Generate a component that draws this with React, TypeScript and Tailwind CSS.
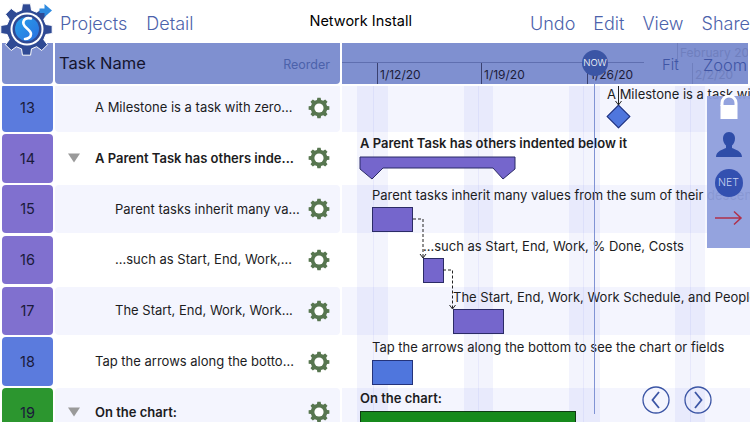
const rows = [
  { id: 13, color: "bg-[#5b7bdd]", name: "A Milestone is a task with zero...", indent: "pl-[40px]", tint: true },
  { id: 14, color: "bg-[#8070cf]", name: "A Parent Task has others inde...", indent: "pl-[40px]", bold: true, caret: true },
  { id: 15, color: "bg-[#8070cf]", name: "Parent tasks inherit many va...", indent: "pl-[60px]", tint: true },
  { id: 16, color: "bg-[#8070cf]", name: "...such as Start, End, Work,...", indent: "pl-[60px]" },
  { id: 17, color: "bg-[#8070cf]", name: "The Start, End, Work, Work...", indent: "pl-[60px]", tint: true },
  { id: 18, color: "bg-[#5b7bdd]", name: "Tap the arrows along the botto...", indent: "pl-[40px]" },
  { id: 19, color: "bg-[#2c962f]", name: "On the chart:", indent: "pl-[40px]", bold: true, caret: true, tint: true },
];

const stripes = [
  { box: "left-[15px] w-[31px]", line: "left-[16px]" },
  { box: "left-[122px] w-[29px]", line: "left-[14px]" },
  { box: "left-[227px] w-[31px]", line: "left-[14px]" },
  { box: "left-[333px] w-[30px]", line: "left-[15px]" },
];

function gearPath(cx: number, cy: number, outer: number, inner: number, teeth: number) {
  const step = (Math.PI * 2) / teeth;
  const pts: string[] = [];
  for (let i = 0; i < teeth; i++) {
    const a = i * step - Math.PI / 2;
    const corners = [
      [inner, a - step * 0.32],
      [outer, a - step * 0.2],
      [outer, a + step * 0.2],
      [inner, a + step * 0.32],
    ];
    for (const [r, t] of corners) {
      pts.push(`${(cx + r * Math.cos(t)).toFixed(2)} ${(cy + r * Math.sin(t)).toFixed(2)}`);
    }
  }
  return "M" + pts.join("L") + "Z";
}

function Gear() {
  return (
    <svg width="22" height="22" viewBox="0 0 22 22" className="shrink-0">
      <path d={gearPath(11, 11, 10.5, 8.3, 8)} fill="#57764f" />
      <circle cx="11" cy="11" r="4.6" fill="#ffffff" />
    </svg>
  );
}

function Logo() {
  return (
    <svg width="56" height="56" viewBox="0 0 56 56" className="absolute left-0 top-0 z-30">
      <defs>
        <linearGradient id="ball" x1="0" y1="0" x2="1" y2="1">
          <stop offset="0" stopColor="#27a0ea" />
          <stop offset="1" stopColor="#2a6fe0" />
        </linearGradient>
      </defs>
      <path d={gearPath(26.5, 29.5, 26, 20, 8)} fill="#2f4a94" stroke="#ffffff" strokeWidth="1" />
      <circle cx="27" cy="29" r="16.5" fill="#ffffff" />
      <circle cx="27" cy="29" r="14.5" fill="#2f4a94" />
      <circle cx="27" cy="29" r="12" fill="url(#ball)" />
      <path d="M31 18.5c-5-1.5-8.500 1.500-7.500 5.500c1 4 7.500 6 7.500 10c0 3-3 5-6 5" fill="none" stroke="#ffffff" strokeWidth="2.6" strokeLinecap="round" />
      <path d="M39.500 8.500h5V4l7.500 6.500l-7.500 6.500v-4h-5z" fill="#2f8be0" />
    </svg>
  );
}

function Caret() {
  return <div className="absolute left-[13px] top-1/2 -translate-y-1/2 w-0 h-0 border-x-[6px] border-x-transparent border-t-[9px] border-t-[#9a9a9a]" />;
}

function DependencyLines() {
  return (
    <svg width="408" height="340" viewBox="342 86 408 340" className="absolute left-0 top-[2.500px] z-10 pointer-events-none" fill="none" stroke="#222" strokeWidth="1">
      <path d="M618.500 86V105M615.500 101l3 4l3-4" />
      <path d="M413 219H423V257" strokeDasharray="3 2" />
      <path d="M420 254l3 4l3-4" />
      <path d="M443 270H452.500V308" strokeDasharray="3 2" />
      <path d="M449.500 305l3 4l3-4" />
    </svg>
  );
}

function ChartRow({ tint, label, className, children }: { tint?: boolean; label: string; className: string; children?: React.ReactNode }) {
  return (
    <div className={`relative h-[48.400px] shrink-0 ${tint ? "bg-[#f4f5fe]" : "bg-white"}`}>
      <div className={`absolute z-10 whitespace-nowrap text-[13px] leading-[16px] text-[#1c1c1e] ${className}`}>{label}</div>
      {children}
    </div>
  );
}

export default function App() {
  return (
    <div className="relative w-[750px] h-[422px] overflow-hidden bg-white font-['Inter',sans-serif]">
      <Logo />

      {/* top bar */}
      <div className="flex items-center h-[43px] text-[18px] font-light text-[#4c62ab]">
        <div className="flex gap-[19px] pl-[60px] pt-[3px] w-[300px]">
          <span>Projects</span>
          <span>Detail</span>
        </div>
        <div className="w-[110px] ml-[15px] text-center text-[14.500px] font-normal text-black pb-[1px] whitespace-nowrap">Network Install</div>
        <div className="flex gap-[18px] ml-[116px] pt-[3px]">
          <span>Undo</span>
          <span>Edit</span>
          <span>View</span>
          <span>Share</span>
        </div>
      </div>

      {/* column headers */}
      <div className="relative z-20 flex h-[43px] pb-[2.500px] bg-white">
        <div className="w-[51px] ml-[2px] rounded-b-[4px] bg-[#7f90d0]" />
        <div className="flex items-center justify-between w-[285px] ml-[2px] rounded-b-[4px] bg-[#7f90d0] pl-[4px] pr-[10px]">
          <span className="text-[16.500px] text-[#14142e]">Task Name</span>
          <span className="text-[12.500px] text-[#4c62ab] pt-[5px]">Reorder</span>
        </div>
        <div className="relative w-[406px] ml-[2px] overflow-hidden bg-[#7f90d0]">
          <div className="absolute left-0 top-[19px] w-[302px] h-px bg-[#5f6fb0]" />
          <div className="absolute left-[35px] bottom-0 h-[21px] border-l border-[#3a4170] pl-[2px] pt-[3px] text-[12px] text-[#1c1c3a]">1/12/20</div>
          <div className="absolute left-[139px] bottom-0 h-[21px] border-l border-[#3a4170] pl-[2px] pt-[3px] text-[12px] text-[#1c1c3a]">1/19/20</div>
          <div className="absolute left-[245px] bottom-0 h-[21px] border-l border-[#3a4170] pl-[2px] pt-[3px] text-[12px] text-[#1c1c3a]">1/26/20</div>
          <div className="absolute left-[350px] bottom-0 h-[21px] border-l border-[#6f7fbe] pl-[2px] pt-[3px] text-[12px] text-[#6f7fbe]">2/2/20</div>
          <div className="absolute left-[335px] top-0 h-[21px] border-l border-[#6f7fbe] pl-[2px] pt-[1px] text-[12px] text-[#6f7fbe] whitespace-nowrap">February 2020</div>
          <div className="absolute left-[320px] top-[11px] text-[15px] font-light text-[#3f55a5]">Fit</div>
          <div className="absolute left-[361px] top-[10px] text-[16.500px] font-light text-[#3f55a5]">Zoom</div>
        </div>
      </div>

      {/* body */}
      <div className="flex -mt-[2.500px]">
        <div className="flex flex-col gap-[2.400px] shrink-0 w-[342px]">
          {rows.map((r) => (
            <div key={r.id} className="flex h-[48.400px] shrink-0">
              <div className={`flex items-center justify-center w-[51px] ml-[2px] rounded-[4px] text-[14.500px] text-[#1a1a3a] ${r.color}`}>{r.id}</div>
              <div className={`relative flex items-center justify-between w-[285px] ml-[2px] rounded-[4px] pr-[10px] ${r.indent} ${r.tint ? "bg-[#f4f5fe]" : "bg-white"}`}>
                {r.caret && <Caret />}
                <span className={`text-[13px] whitespace-nowrap text-[#1c1c1e] ${r.bold ? "font-semibold" : ""}`}>{r.name}</span>
                <Gear />
              </div>
            </div>
          ))}
        </div>

        {/* gantt chart */}
        <div className="relative flex-1 flex flex-col gap-[2.400px] h-[400px]">
          <ChartRow tint label="A Milestone is a task with zero duration" className="left-[265px] top-[2px] pt-[0px] translate-y-[0px] mt-[-0px] [margin-top:4px]">
            <div className="absolute z-10 left-[268px] top-[24.500px] w-[17px] h-[17px] rotate-45 bg-[#4f76dd] border border-[#24337a]" />
          </ChartRow>
          <ChartRow label="A Parent Task has others indented below it" className="left-[18px] top-[1px] font-semibold">
            <svg width="160" height="26" viewBox="358 155 160 26" className="absolute z-10 left-[16px] top-[20.500px]">
              <path d="M360 157H515V169L503 179L493 168H383L372 179L360 169Z" fill="#7566cc" stroke="#2b2b66" strokeWidth="1" />
            </svg>
          </ChartRow>
          <ChartRow tint label="Parent tasks inherit many values from the sum of their descendants" className="left-[30px] top-[2px]">
            <div className="absolute z-10 left-[30px] top-[22px] w-[41px] h-[25px] bg-[#7566cc] border border-[#2b2b66]" />
          </ChartRow>
          <ChartRow label="...such as Start, End, Work, % Done, Costs" className="left-[81px] top-[2px]">
            <div className="absolute z-10 left-[81px] top-[22px] w-[21px] h-[25px] bg-[#7566cc] border border-[#2b2b66]" />
          </ChartRow>
          <ChartRow tint label="The Start, End, Work, Work Schedule, and People in" className="left-[111px] top-[2px]">
            <div className="absolute z-10 left-[110.500px] top-[22px] w-[51px] h-[25px] bg-[#7566cc] border border-[#2b2b66]" />
          </ChartRow>
          <ChartRow label="Tap the arrows along the bottom to see the chart or fields" className="left-[30px] top-[2px]">
            <div className="absolute z-10 left-[30px] top-[23px] w-[41px] h-[25px] bg-[#4f76dd] border border-[#24337a]" />
          </ChartRow>
          <ChartRow tint label="On the chart:" className="left-[18px] top-[2px] font-semibold">
            <div className="absolute z-10 left-[18px] top-[22.500px] w-[216px] h-[25px] bg-[#168a1c] border border-[#0f3a14]" />
          </ChartRow>

          {stripes.map((s) => (
            <div key={s.box} className={`absolute top-[2.500px] bottom-0 bg-[#5a68e0]/[0.07] ${s.box}`}>
              <div className={`absolute top-0 bottom-0 w-px bg-[#5a68e0]/[0.08] ${s.line}`} />
            </div>
          ))}

          <DependencyLines />
        </div>
      </div>

      {/* now marker */}
      <div className="absolute z-30 left-[582px] top-[50px] flex items-center justify-center w-[26px] h-[26px] rounded-full bg-[#3b55a5] text-[9.500px] font-light text-white">NOW</div>
      <div className="absolute z-20 left-[594px] top-[76px] w-px h-[338px] bg-[#8093d4]" />

      {/* side tools */}
      <div className="absolute z-30 left-[707px] top-[96px] flex flex-col items-center w-[43px] h-[152px] bg-[#8e9edc]/95">
        <svg width="20" height="26" viewBox="0 0 20 26" className="mt-[-1px]">
          <path d="M3 11V8a7 7 0 0 1 14 0v2" fill="none" stroke="#ffffff" strokeWidth="3" />
          <rect x="1.500" y="10" width="17" height="14" fill="#ffffff" />
        </svg>
        <svg width="28" height="28" viewBox="0 0 28 28" className="mt-[10px]">
          <path d="M14 1c4 0 6 3 6 6.500c0 3-1.300 5.500-3 7v2.500c3 1.500 10 3 10 9H1c0-6 7-7.500 10-9v-2.500c-1.700-1.500-3-4-3-7C8 4 10 1 14 1z" fill="#2f4da8" />
        </svg>
        <div className="flex items-center justify-center mt-[10px] w-[28px] h-[28px] rounded-full bg-[#3350b0] text-[10.500px] font-light text-[#c6d0f0]">NET</div>
        <svg width="28" height="16" viewBox="0 0 28 16" className="mt-[13px]">
          <path d="M0 8H26M19 1.500L26 8L19 14.500" fill="none" stroke="#b0304a" strokeWidth="1.500" />
        </svg>
      </div>

      {/* chart paging */}
      <div className="absolute z-30 left-[642px] top-[385.500px] flex gap-[13.500px]">
        <svg width="28" height="28" viewBox="0 0 28 28" fill="none" stroke="#3b55a5">
          <circle cx="14" cy="14" r="13" strokeWidth="1.300" />
          <path d="M17 6L10.500 14L17 22" strokeWidth="1.800" />
        </svg>
        <svg width="28" height="28" viewBox="0 0 28 28" fill="none" stroke="#3b55a5">
          <circle cx="14" cy="14" r="13" strokeWidth="1.300" />
          <path d="M11 6L17.500 14L11 22" strokeWidth="1.800" />
        </svg>
      </div>
    </div>
  );
}
